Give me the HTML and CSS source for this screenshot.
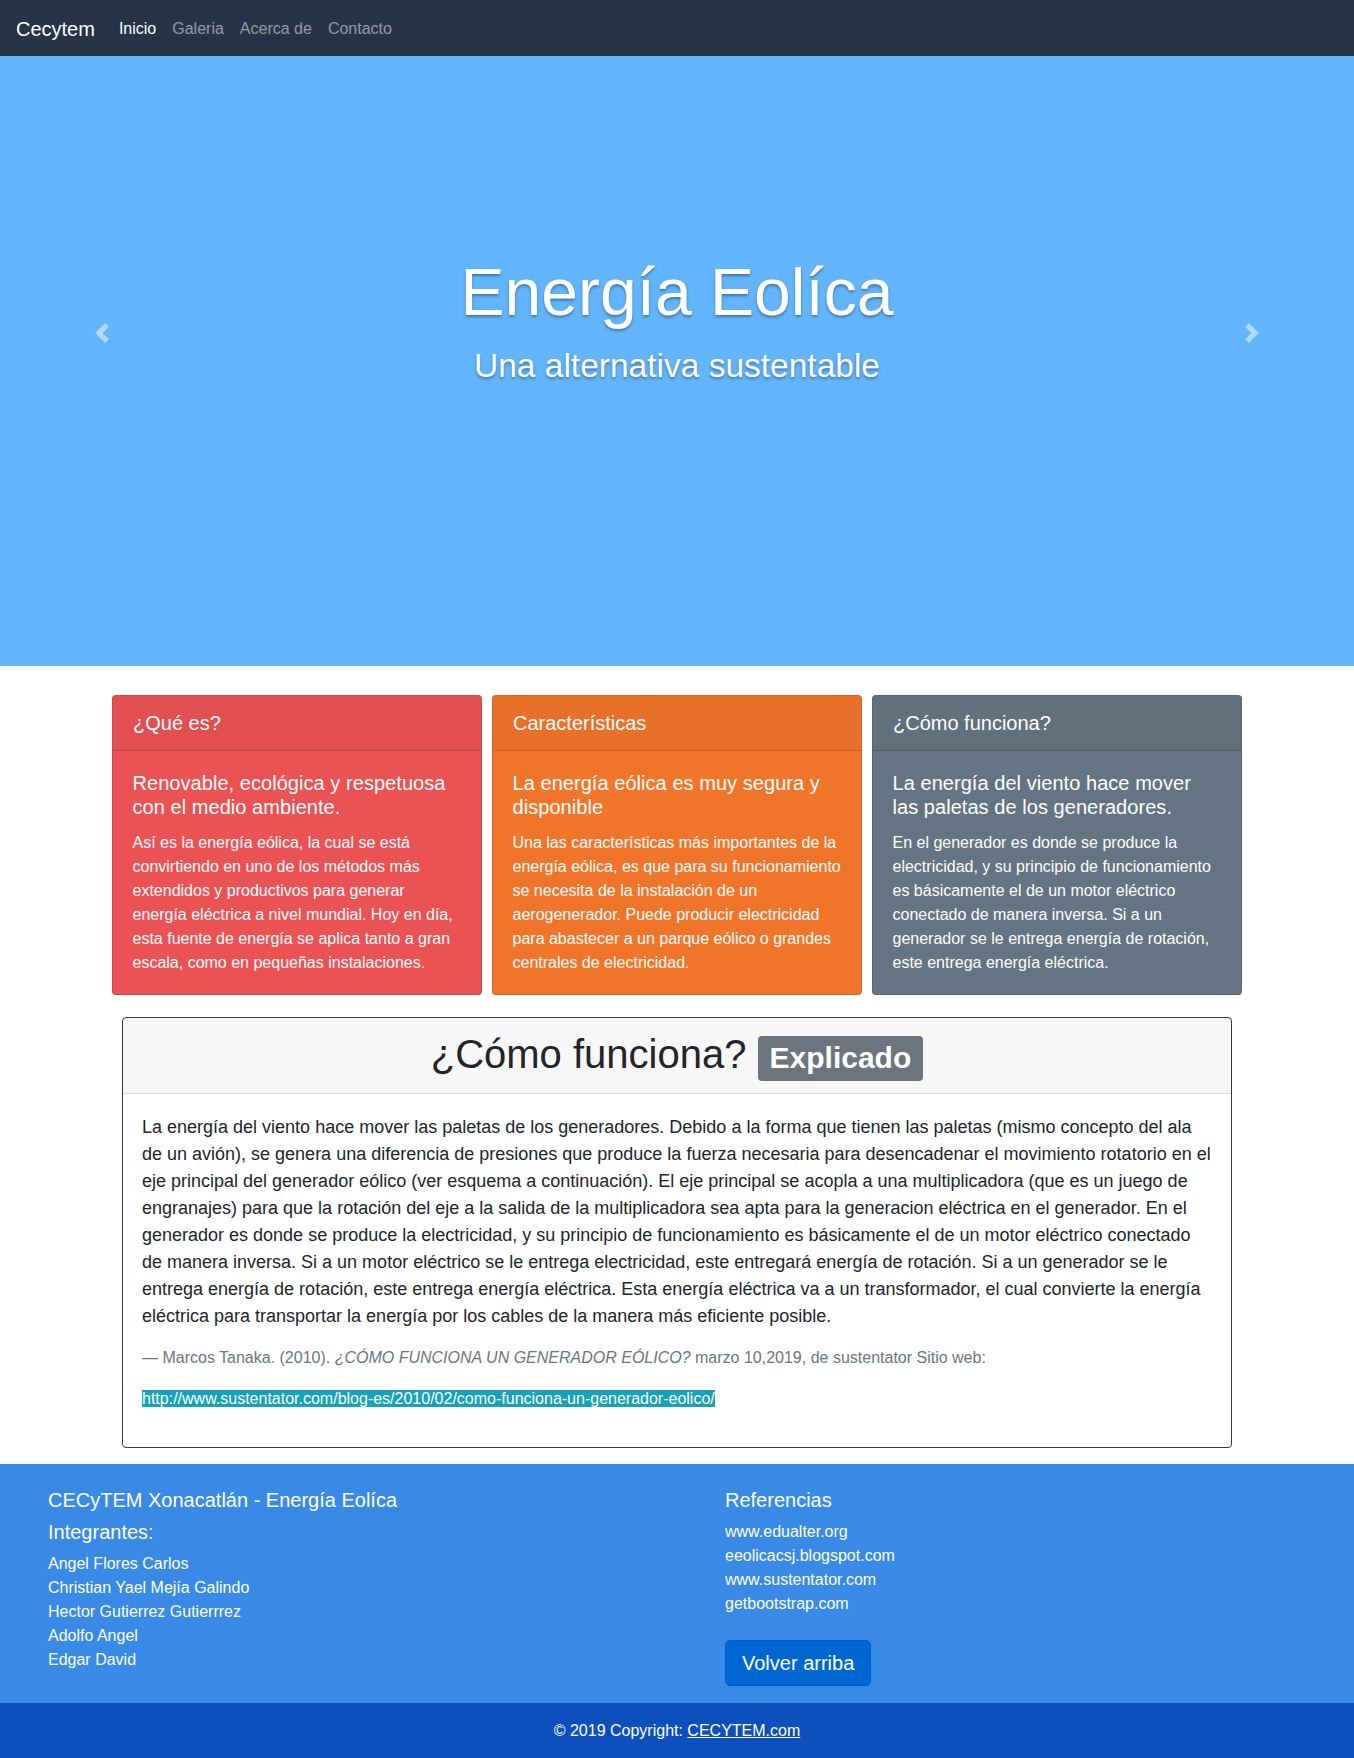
FILE: index.html
```html
<!DOCTYPE html>
<html lang="es">
<head>
<meta charset="utf-8">
<title>Energía Eolíca</title>
<link rel="stylesheet" href="styles.css">
</head>
<body>
<nav class="navbar">
  <a class="brand" href="#">Cecytem</a>
  <ul class="nav">
    <li><a class="nav-link active" href="#">Inicio</a></li>
    <li><a class="nav-link" href="#">Galeria</a></li>
    <li><a class="nav-link" href="#">Acerca de</a></li>
    <li><a class="nav-link" href="#">Contacto</a></li>
  </ul>
</nav>

<section class="hero">
  <h1 class="hero-title">Energía Eolíca</h1>
  <h2 class="hero-sub">Una alternativa sustentable</h2>
  <a class="ctrl ctrl-prev" href="#"><svg viewBox="0 0 8 8" width="20" height="20"><path fill="#fff" d="M5.25 0l-4 4 4 4 1.5-1.5-2.5-2.5 2.5-2.5-1.5-1.5z"/></svg></a>
  <a class="ctrl ctrl-next" href="#"><svg viewBox="0 0 8 8" width="20" height="20"><path fill="#fff" d="M2.75 0l-1.5 1.5 2.5 2.5-2.5 2.5 1.5 1.5 4-4-4-4z"/></svg></a>
</section>

<main class="content">
  <div class="card-deck">
    <div class="card card-red">
      <div class="card-header">¿Qué es?</div>
      <div class="card-body">
        <h5 class="card-title">Renovable, ecológica y respetuosa con el medio ambiente.</h5>
        <p class="card-text">Así es la energía eólica, la cual se está convirtiendo en uno de los métodos más extendidos y productivos para generar energía eléctrica a nivel mundial. Hoy en día, esta fuente de energía se aplica tanto a gran escala, como en pequeñas instalaciones.</p>
      </div>
    </div>
    <div class="card card-orange">
      <div class="card-header">Características</div>
      <div class="card-body">
        <h5 class="card-title">La energía eólica es muy segura y disponible</h5>
        <p class="card-text">Una las características más importantes de la energía eólica, es que para su funcionamiento se necesita de la instalación de un aerogenerador. Puede producir electricidad para abastecer a un parque eólico o grandes centrales de electricidad.</p>
      </div>
    </div>
    <div class="card card-gray">
      <div class="card-header">¿Cómo funciona?</div>
      <div class="card-body">
        <h5 class="card-title">La energía del viento hace mover las paletas de los generadores.</h5>
        <p class="card-text">En el generador es donde se produce la electricidad, y su principio de funcionamiento es básicamente el de un motor eléctrico conectado de manera inversa. Si a un generador se le entrega energía de rotación, este entrega energía eléctrica.</p>
      </div>
    </div>
  </div>

  <div class="explain">
    <div class="explain-header">
      <h1 class="explain-title">¿Cómo funciona? <span class="badge">Explicado</span></h1>
    </div>
    <div class="explain-body">
      <blockquote class="quote">
        <p class="quote-text">La energía del viento hace mover las paletas de los generadores. Debido a la forma que tienen las paletas (mismo concepto del ala de un avión), se genera una diferencia de presiones que produce la fuerza necesaria para desencadenar el movimiento rotatorio en el eje principal del generador eólico (ver esquema a continuación). El eje principal se acopla a una multiplicadora (que es un juego de engranajes) para que la rotación del eje a la salida de la multiplicadora sea apta para la generacion eléctrica en el generador. En el generador es donde se produce la electricidad, y su principio de funcionamiento es básicamente el de un motor eléctrico conectado de manera inversa. Si a un motor eléctrico se le entrega electricidad, este entregará energía de rotación. Si a un generador se le entrega energía de rotación, este entrega energía eléctrica. Esta energía eléctrica va a un transformador, el cual convierte la energía eléctrica para transportar la energía por los cables de la manera más eficiente posible.</p>
        <footer class="quote-footer">— Marcos Tanaka. (2010). <cite>¿CÓMO FUNCIONA UN GENERADOR EÓLICO?</cite> marzo 10,2019, de sustentator Sitio web:</footer>
        <p class="quote-link"><a href="#">http://www.sustentator.com/blog-es/2010/02/como-funciona-un-generador-eolico/</a></p>
      </blockquote>
    </div>
  </div>
</main>

<footer class="site-footer">
  <div class="footer-cols">
    <div class="footer-col">
      <h5 class="footer-title">CECyTEM Xonacatlán - Energía Eolíca</h5>
      <h5 class="footer-title">Integrantes:</h5>
      <ul class="footer-list">
        <li>Angel Flores Carlos</li>
        <li>Christian Yael Mejía Galindo</li>
        <li>Hector Gutierrez Gutierrrez</li>
        <li>Adolfo Angel</li>
        <li>Edgar David</li>
      </ul>
    </div>
    <div class="footer-col">
      <h5 class="footer-title">Referencias</h5>
      <ul class="footer-list">
        <li><a href="#">www.edualter.org</a></li>
        <li><a href="#">eeolicacsj.blogspot.com</a></li>
        <li><a href="#">www.sustentator.com</a></li>
        <li><a href="#">getbootstrap.com</a></li>
      </ul>
      <a class="btn-top" href="#">Volver arriba</a>
    </div>
  </div>
  <div class="copyright">© 2019 Copyright: <a href="#">CECYTEM.com</a></div>
</footer>
</body>
</html>
```

FILE: styles.css
```css
* { box-sizing: border-box; }

html, body {
  margin: 0;
  padding: 0;
}

body {
  font-family: "Liberation Sans", Arial, sans-serif;
  font-size: 16px;
  line-height: 1.5;
  color: #212529;
  background: #fff;
}

a { text-decoration: none; }

/* Navbar */
.navbar {
  display: flex;
  align-items: center;
  height: 56px;
  padding: 9px 16px 7px;
  background: #273447;
}

.brand {
  font-size: 20px;
  line-height: 30px;
  color: #fff;
  margin-right: 16px;
}

.nav {
  display: flex;
  list-style: none;
  margin: 0;
  padding: 0;
}

.nav-link {
  display: block;
  padding: 8px;
  color: rgba(255, 255, 255, 0.5);
  line-height: 24px;
}

.nav-link.active { color: #fff; }

/* Hero */
.hero {
  position: relative;
  height: 610px;
  padding-top: 197px;
  background: #62b5fb;
  text-align: center;
  color: #fff;
}

.hero-title {
  margin: 0 0 14px;
  font-size: 66px;
  line-height: 1.2;
  font-weight: 400;
  text-shadow: 0 2px 3px rgba(0, 0, 0, 0.35);
}

.hero-sub {
  margin: 0;
  font-size: 33.5px;
  line-height: 1.2;
  font-weight: 400;
  text-shadow: 0 2px 3px rgba(0, 0, 0, 0.35);
}

.ctrl {
  position: absolute;
  top: 267px;
  width: 20px;
  height: 20px;
  opacity: 0.5;
}

.ctrl svg { display: block; }

.ctrl-prev { left: 92px; }
.ctrl-next { right: 92px; }

/* Content */
.content {
  width: 1130px;
  margin: 29px auto 16px;
}

.card-deck {
  display: grid;
  grid-template-columns: repeat(3, 1fr);
  gap: 10px;
}

.card {
  border: 1px solid rgba(0, 0, 0, 0.125);
  border-radius: 4px;
  color: #fff;
  overflow: hidden;
}

.card-red { background: #ea5254; }
.card-orange { background: #f1742b; }
.card-gray { background: #647482; }

.card-header {
  padding: 12px 20px;
  font-size: 20px;
  line-height: 30px;
  background: rgba(0, 0, 0, 0.03);
  border-bottom: 1px solid rgba(0, 0, 0, 0.125);
}

.card-body {
  padding: 20px 19.5px 19px;
}

.card-title {
  margin: 0 0 12px;
  font-size: 20px;
  line-height: 1.2;
  font-weight: 400;
  letter-spacing: 0.05px;
}

.card-text {
  margin: 0;
  font-size: 16px;
  line-height: 24px;
}

/* Explained card */
.explain {
  width: 1110px;
  margin: 22px auto 0;
  border: 1px solid #343a40;
  border-radius: 4px;
  overflow: hidden;
}

.explain-header {
  padding: 12px 20px;
  background: rgba(0, 0, 0, 0.03);
  border-bottom: 1px solid rgba(0, 0, 0, 0.125);
  text-align: center;
}

.explain-title {
  margin: 0;
  font-size: 40px;
  line-height: 1.2;
  font-weight: 400;
  color: #212529;
}

.badge {
  display: inline-block;
  padding: 0.25em 0.4em;
  font-size: 75%;
  font-weight: 700;
  line-height: 1;
  color: #fff;
  background: #6c757d;
  border-radius: 4px;
  vertical-align: baseline;
}

.explain-body {
  padding: 20px 19px;
}

.quote {
  margin: 0;
}

.quote-text {
  margin: 0 0 16px;
  font-size: 18px;
  line-height: 27px;
}

.quote-footer {
  display: block;
  font-size: 16px;
  line-height: 24px;
  color: #6c757d;
}

.quote-link {
  margin: 17px 0 16px;
  font-size: 16px;
  line-height: 24px;
}

.quote-link a {
  color: #fff;
  background: #17a2b8;
}

/* Footer */
.site-footer {
  background: #388ae6;
  color: #fff;
}

.footer-cols {
  display: grid;
  grid-template-columns: 1fr 1fr;
  padding: 24px 0 17px;
}

.footer-col {
  padding-left: 48px;
}

.footer-title {
  margin: 0 0 8px;
  font-size: 20px;
  line-height: 1.2;
  font-weight: 400;
}

.footer-list {
  list-style: none;
  margin: 0;
  padding: 0;
  line-height: 24px;
}

.footer-list a { color: #fff; }

.footer-col .footer-list + .btn-top { margin-top: 24px; }

.btn-top {
  display: inline-block;
  padding: 7px 16px;
  font-size: 20px;
  line-height: 30px;
  color: #fff;
  background: #0066d2;
  border: 1px solid #005fc4;
  border-radius: 5px;
}

.copyright {
  padding: 16px 0 17px;
  background: #0d4fbd;
  text-align: center;
  line-height: 24px;
}

.copyright a {
  color: #fff;
  text-decoration: underline;
}
```
